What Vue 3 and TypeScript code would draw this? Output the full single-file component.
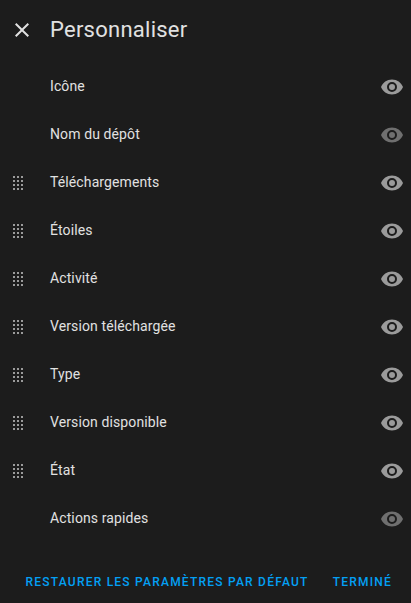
<script setup lang="ts">
interface Column {
  label: string
  movable: boolean
  visible: boolean
}

const columns: Column[] = [
  { label: 'Icône', movable: false, visible: true },
  { label: 'Nom du dépôt', movable: false, visible: false },
  { label: 'Téléchargements', movable: true, visible: true },
  { label: 'Étoiles', movable: true, visible: true },
  { label: 'Activité', movable: true, visible: true },
  { label: 'Version téléchargée', movable: true, visible: true },
  { label: 'Type', movable: true, visible: true },
  { label: 'Version disponible', movable: true, visible: true },
  { label: 'État', movable: true, visible: true },
  { label: 'Actions rapides', movable: false, visible: false },
]
</script>

<template>
  <div class="dialog">
    <header class="header">
      <button class="close" aria-label="Fermer">
        <svg viewBox="0 0 24 24"><path d="M19,6.41L17.59,5L12,10.59L6.41,5L5,6.41L10.59,12L5,17.59L6.41,19L12,13.41L17.59,19L19,17.59L13.41,12L19,6.41Z" /></svg>
      </button>
      <h1 class="title">Personnaliser</h1>
    </header>
    <ul class="list">
      <li v-for="column in columns" :key="column.label" class="row">
        <span class="handle">
          <svg v-if="column.movable" viewBox="0 0 10 14" shape-rendering="crispEdges">
            <template v-for="y in 4" :key="y">
              <rect v-for="x in 3" :key="x" :x="(x - 1) * 4" :y="(y - 1) * 4" width="2" height="2" />
            </template>
          </svg>
        </span>
        <span class="label">{{ column.label }}</span>
        <button class="eye" :class="{ disabled: !column.visible }" :aria-label="column.label">
          <svg viewBox="0 0 24 24"><path d="M12,9A3,3 0 0,0 9,12A3,3 0 0,0 12,15A3,3 0 0,0 15,12A3,3 0 0,0 12,9M12,17A5,5 0 0,1 7,12A5,5 0 0,1 12,7A5,5 0 0,1 17,12A5,5 0 0,1 12,17M12,4.5C7,4.5 2.73,7.61 1,12C2.73,16.39 7,19.5 12,19.5C17,19.5 21.27,16.39 23,12C21.27,7.61 17,4.5 12,4.5Z" /></svg>
        </button>
      </li>
    </ul>
    <footer class="footer">
      <button class="action">Restaurer les paramètres par défaut</button>
      <button class="action">Terminé</button>
    </footer>
  </div>
</template>

<style>
body { background: #1c1c1c; }
</style>

<style scoped>
.dialog { display: flex; flex-direction: column; height: 603px; overflow: hidden; background: #1c1c1c; color: #e1e1e1; font-family: Roboto, sans-serif; }
button { padding: 0; border: 0; background: none; color: inherit; font: inherit; }
svg { display: block; fill: currentColor; }
.header { display: flex; align-items: center; height: 60px; padding: 0 10px; box-sizing: border-box; gap: 16px; }
.close svg { width: 24px; height: 24px; }
.title { margin: 0; font-size: 22px; font-weight: 400; line-height: 28px; letter-spacing: 0.25px; }
.list { margin: 0; padding: 2px 0 0; list-style: none; }
.row { display: flex; align-items: center; height: 48px; padding: 0 7px 0 13px; }
.handle { width: 37px; padding-top: 2px; color: #9b9b9b; }
.handle svg { width: 10px; height: 14px; }
.label { flex: 1; font-size: 14px; line-height: 20px; letter-spacing: 0.11px; }
.eye { padding-top: 2px; color: #9b9b9b; }
.eye svg { width: 24px; height: 24px; }
.disabled { color: #6f6f6f; }
.footer { display: flex; justify-content: flex-end; align-items: center; flex: 1; padding: 18px 19px 0 0; gap: 24px; color: #03a0f4; }
.action { font-size: 12px; font-weight: 500; letter-spacing: 1.22px; text-transform: uppercase; white-space: nowrap; }
</style>
